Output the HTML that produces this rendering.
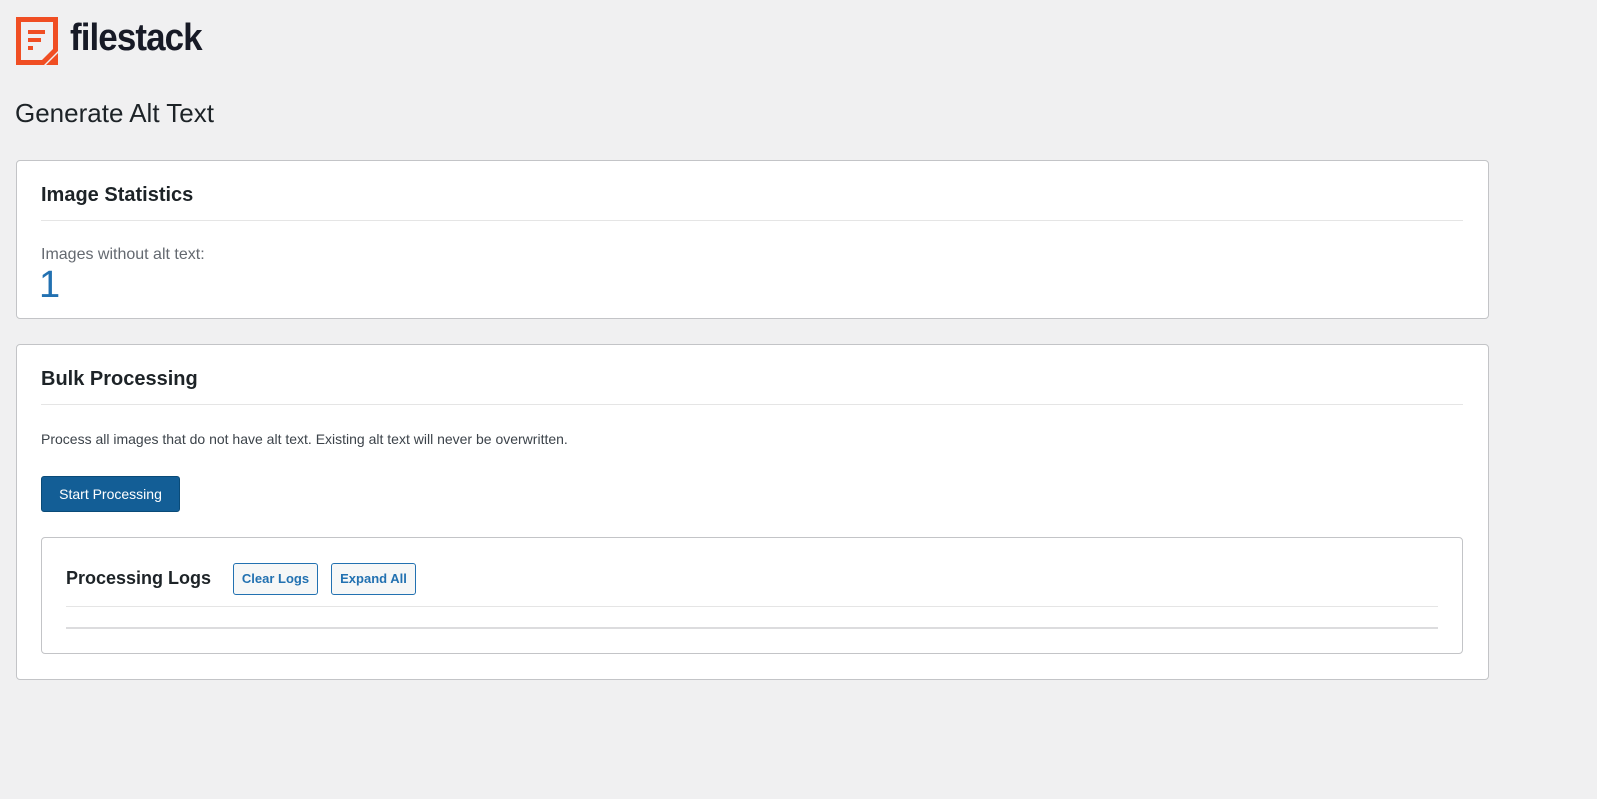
<!DOCTYPE html>
<html><head><style>
*{box-sizing:border-box;margin:0;padding:0}
body{width:1597px;height:799px;background:#f0f0f1;font-family:"Liberation Sans",sans-serif;color:#1d2327;position:relative;overflow:hidden}
.abs{position:absolute}
.card{position:absolute;left:16px;width:1473px;background:#fff;border:1px solid #c3c4c7;border-radius:4px}
h2{position:absolute;font-size:20px;font-weight:600;color:#1d2327}
.hr{position:absolute;height:1px;background:#e5e5e5}
.btn2{position:absolute;top:563px;height:32px;border:1px solid #2271b1;border-radius:3px;background:#f6f7f7;color:#2271b1;font-size:13px;font-weight:600;line-height:30px;text-align:center}
</style></head><body>
<svg class="abs" style="left:16px;top:17px" width="44" height="50" viewBox="0 0 44 50">
<path d="M0 0H42V34L28 48H0Z M5 5V43H26L37 32V5Z" fill="#f04e23" fill-rule="evenodd"/>
<path d="M30 48L42 36V48Z" fill="#f04e23"/>
<rect x="12" y="13" width="17" height="4" fill="#f04e23"/>
<rect x="12" y="21" width="13" height="4" fill="#f04e23"/>
<rect x="12" y="29" width="5" height="4" fill="#f04e23"/>
</svg>
<div class="abs" style="left:70px;top:17px;font-size:38px;font-weight:700;color:#171a26;letter-spacing:-1px;transform:scaleX(0.92);transform-origin:left">filestack</div>
<div class="abs" style="left:15px;top:98px;font-size:26px;color:#1d2327">Generate Alt Text</div>

<div class="card" style="top:160px;height:159px"></div>
<h2 style="left:41px;top:184px">Image Statistics</h2>
<div class="hr" style="left:41px;top:220px;width:1422px"></div>
<div class="abs" style="left:41px;top:246px;font-size:16px;color:#646970">Images without alt text:</div>
<div class="abs" style="left:39px;top:264px;font-size:38px;color:#2271b1;font-weight:400">1</div>

<div class="card" style="top:344px;height:336px"></div>
<h2 style="left:41px;top:368px">Bulk Processing</h2>
<div class="hr" style="left:41px;top:404px;width:1422px"></div>
<div class="abs" style="left:41px;top:431px;font-size:14px;color:#3c434a">Process all images that do not have alt text. Existing alt text will never be overwritten.</div>
<div class="abs" style="left:41px;top:476px;width:139px;height:36px;background:#135e96;border:1px solid #0a4b78;border-radius:3px;color:#fff;font-size:14px;line-height:34px;text-align:center">Start Processing</div>

<div class="abs" style="left:41px;top:537px;width:1422px;height:117px;border:1px solid #c3c4c7;border-radius:4px;background:#fff"></div>
<div class="abs" style="left:66px;top:568px;font-size:18px;font-weight:600">Processing Logs</div>
<div class="btn2" style="left:233px;width:85px">Clear Logs</div>
<div class="btn2" style="left:331px;width:85px">Expand All</div>
<div class="hr" style="left:66px;top:606px;width:1372px"></div>
<div class="abs" style="left:66px;top:627px;width:1372px;height:2px;background:#dcdcde"></div>
</body></html>
